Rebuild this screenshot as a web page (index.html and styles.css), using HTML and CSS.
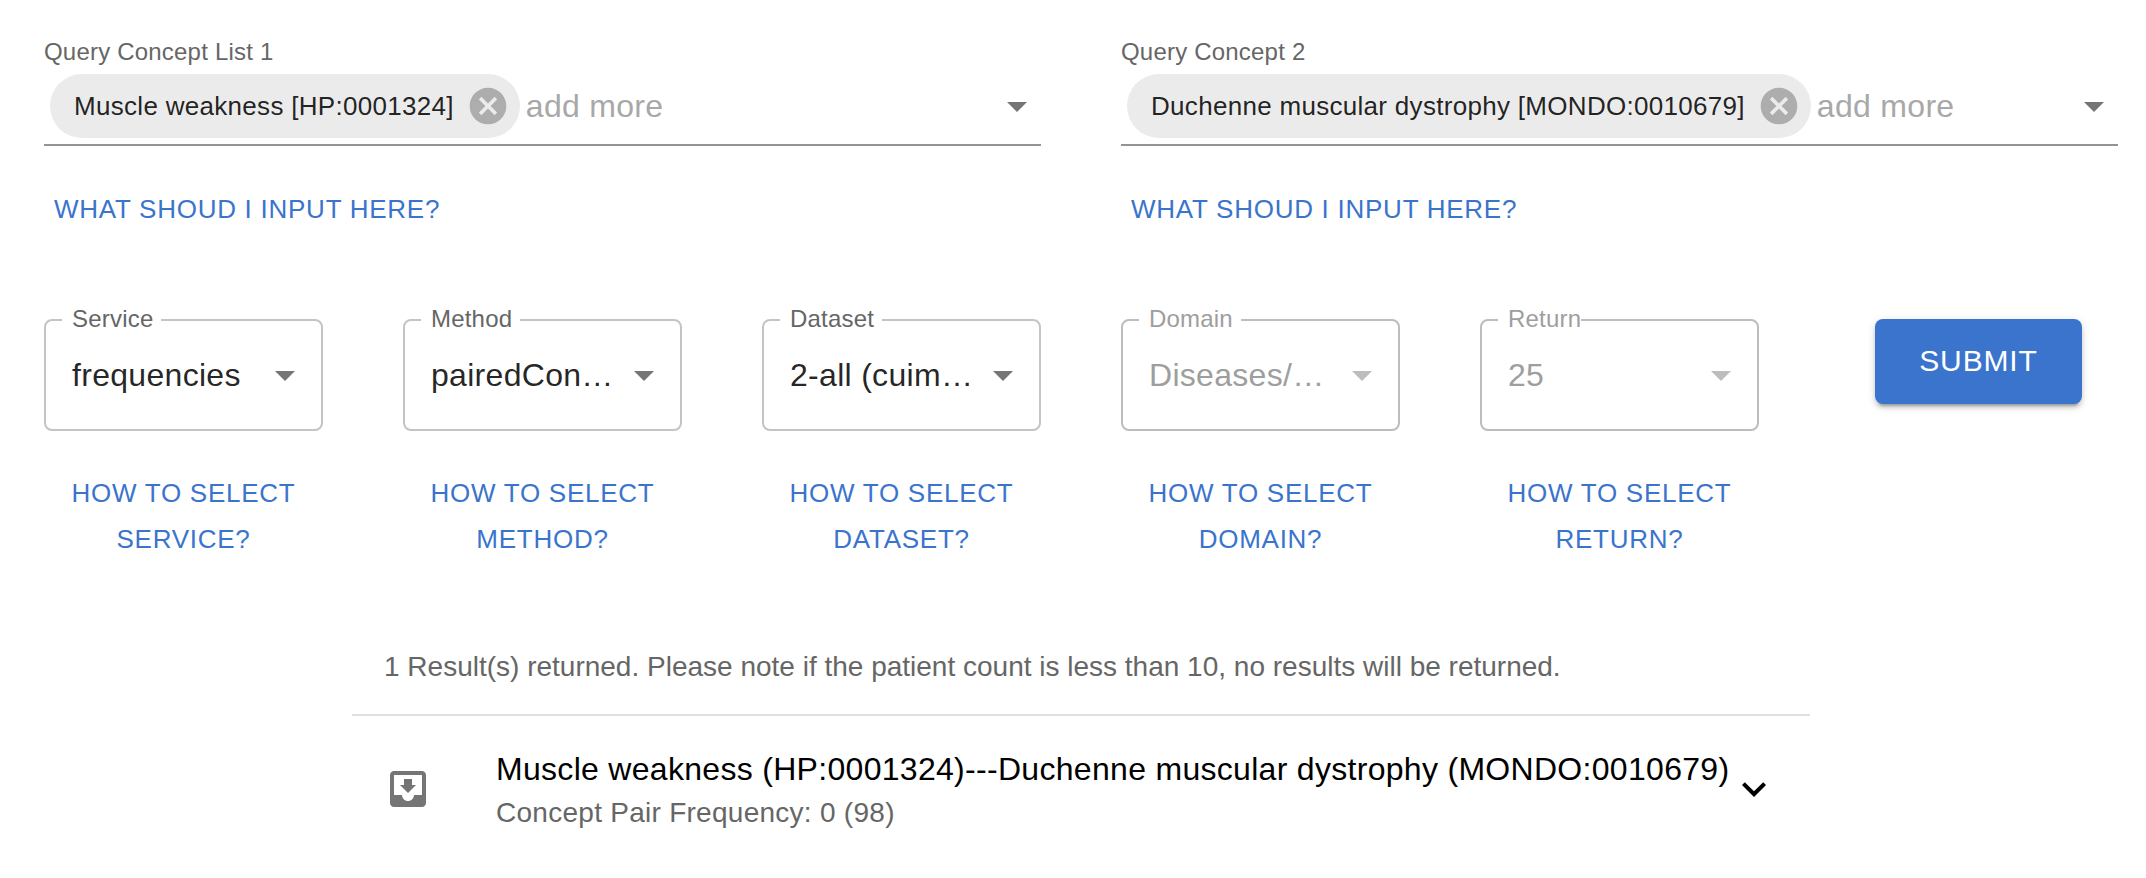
FILE: index.html
```html
<!DOCTYPE html>
<html lang="en">

<head>
    <meta charset="UTF-8">
    <meta name="viewport" content="width=device-width, initial-scale=1.0">
    <link rel="stylesheet" href="styles.css">
    <title>Concept Pair Query</title>
</head>

<body>
    <svg class="icon-defs" width="0" height="0">
        <symbol id="arrow" viewBox="0 0 24 24"><path d="M7 10l5 5 5-5z" /></symbol>
        <symbol id="cancel" viewBox="0 0 24 24"><path d="M12 2C6.47 2 2 6.47 2 12s4.47 10 10 10 10-4.47 10-10S17.53 2 12 2zm5 13.59L15.59 17 12 13.41 8.41 17 7 15.59 10.59 12 7 8.41 8.41 7 12 10.59 15.59 7 17 8.41 13.41 12 17 15.59z" /></symbol>
    </svg>

    <main class="page">
        <section class="concepts">
            <div class="concept">
                <div class="concept-label">Query Concept List 1</div>
                <div class="concept-field">
                    <span class="chip">
                        <span class="chip-text">Muscle weakness [HP:0001324]</span>
                        <svg class="chip-delete"><use href="#cancel" /></svg>
                    </span>
                    <span class="add-more">add more</span>
                    <svg class="arrow"><use href="#arrow" /></svg>
                </div>
                <a class="link-button" href="#">What shoud I input here?</a>
            </div>
            <div class="concept">
                <div class="concept-label">Query Concept 2</div>
                <div class="concept-field">
                    <span class="chip">
                        <span class="chip-text">Duchenne muscular dystrophy [MONDO:0010679]</span>
                        <svg class="chip-delete"><use href="#cancel" /></svg>
                    </span>
                    <span class="add-more">add more</span>
                    <svg class="arrow"><use href="#arrow" /></svg>
                </div>
                <a class="link-button" href="#">What shoud I input here?</a>
            </div>
        </section>

        <section class="options">
            <div class="option">
                <div class="select">
                    <span class="select-label">Service</span>
                    <span class="select-value">frequencies</span>
                    <svg class="arrow"><use href="#arrow" /></svg>
                </div>
                <a class="link-button link-centered" href="#">How to select Service?</a>
            </div>
            <div class="option">
                <div class="select">
                    <span class="select-label">Method</span>
                    <span class="select-value">pairedCon…</span>
                    <svg class="arrow"><use href="#arrow" /></svg>
                </div>
                <a class="link-button link-centered" href="#">How to select Method?</a>
            </div>
            <div class="option">
                <div class="select">
                    <span class="select-label">Dataset</span>
                    <span class="select-value">2-all (cuim…</span>
                    <svg class="arrow"><use href="#arrow" /></svg>
                </div>
                <a class="link-button link-centered" href="#">How to select Dataset?</a>
            </div>
            <div class="option">
                <div class="select disabled">
                    <span class="select-label">Domain</span>
                    <span class="select-value">Diseases/…</span>
                    <svg class="arrow"><use href="#arrow" /></svg>
                </div>
                <a class="link-button link-centered" href="#">How to select Domain?</a>
            </div>
            <div class="option">
                <div class="select disabled">
                    <span class="select-label label-tight">Return</span>
                    <span class="select-value">25</span>
                    <svg class="arrow"><use href="#arrow" /></svg>
                </div>
                <a class="link-button link-centered" href="#">How to select Return?</a>
            </div>
            <div class="option option-submit">
                <button class="submit" type="button">Submit</button>
            </div>
        </section>

        <section class="results">
            <p class="results-note">1 Result(s) returned. Please note if the patient count is less than 10, no results will be returned.</p>
            <div class="result-row">
                <svg class="result-icon" viewBox="0 0 24 24">
                    <path d="M19 3H4.99c-1.11 0-1.98.9-1.98 2L3 19c0 1.1.88 2 1.99 2H19c1.1 0 2-.9 2-2V5c0-1.1-.9-2-2-2zm0 12h-4c0 1.66-1.35 3-3 3s-3-1.34-3-3H4.99V5H19v10zm-3-5h-2V7h-4v3H8l4 4 4-4z" />
                </svg>
                <div class="result-text">
                    <div class="result-title">Muscle weakness (HP:0001324)---Duchenne muscular dystrophy (MONDO:0010679)</div>
                    <div class="result-sub">Concept Pair Frequency: 0 (98)</div>
                </div>
                <svg class="result-expand" viewBox="0 0 24 24">
                    <path d="M16.59 8.59 12 13.17 7.41 8.59 6 10l6 6 6-6z" />
                </svg>
            </div>
        </section>
    </main>
</body>

</html>
```

FILE: styles.css
```css
body {
    font-family: "Liberation Sans", Arial, sans-serif;
    margin: 0;
    padding: 0;
    color: rgba(0, 0, 0, 0.87);
    background-color: white;
}

.icon-defs {
    position: absolute;
}

.page {
    width: 2074px;
    margin-left: 44px;
    padding-top: 36px;
}

/* top row */
.concepts {
    display: grid;
    grid-template-columns: repeat(2, minmax(0, 1fr));
    column-gap: 80px;
}

.concept-label {
    font-size: 24px;
    line-height: 32px;
    color: #666;
    letter-spacing: 0.2px;
}

.concept-field {
    display: flex;
    align-items: center;
    height: 76px;
    border-bottom: 2px solid #949494;
}

.chip {
    display: flex;
    align-items: center;
    height: 64px;
    margin-left: 6px;
    margin-right: 6px;
    border-radius: 32px;
    background-color: #ebebeb;
    flex-shrink: 0;
}

.chip-text {
    font-size: 26px;
    letter-spacing: 0.3px;
    padding: 0 24px;
    white-space: nowrap;
}

.chip-delete {
    width: 44px;
    height: 44px;
    margin: 0 10px 0 -12px;
    fill: #adadad;
}

.add-more {
    flex: 1;
    font-size: 32px;
    letter-spacing: 0.3px;
    color: #a8a8a8;
}

.arrow {
    width: 48px;
    height: 48px;
    flex-shrink: 0;
    fill: #757575;
}

.link-button {
    display: block;
    width: max-content;
    margin-top: 32px;
    padding: 8px 10px;
    font-size: 26px;
    line-height: 46px;
    letter-spacing: 0.74px;
    text-transform: uppercase;
    text-decoration: none;
    color: #3a74cc;
}

.link-centered {
    width: auto;
    margin-top: 31px;
    text-align: center;
}

/* select row */
.options {
    display: grid;
    grid-template-columns: repeat(6, minmax(0, 1fr));
    column-gap: 80px;
    margin-top: 79px;
}

.select {
    position: relative;
    display: flex;
    align-items: center;
    height: 112px;
    box-sizing: border-box;
    padding: 0 12px 0 26px;
    border: 2px solid #c4c4c4;
    border-radius: 8px;
}

.select-label {
    position: absolute;
    top: -16px;
    left: 16px;
    padding: 0 8px 0 10px;
    font-size: 24px;
    line-height: 28px;
    letter-spacing: 0.2px;
    color: #666;
    background-color: white;
}

.label-tight {
    padding-right: 0;
}

.select-value {
    flex: 1;
    min-width: 0;
    font-size: 32px;
    letter-spacing: 0.3px;
    white-space: nowrap;
}

.disabled {
    border-color: #bdbdbd;
}

.disabled .select-label,
.disabled .select-value {
    color: #9e9e9e;
}

.disabled .arrow {
    fill: #bdbdbd;
}

.option-submit {
    display: flex;
    justify-content: center;
    align-items: flex-start;
}

.submit {
    padding: 16px 44px;
    font-family: inherit;
    font-size: 30px;
    line-height: 52.5px;
    letter-spacing: 0.86px;
    text-transform: uppercase;
    color: white;
    background-color: #3a74cc;
    border: none;
    border-radius: 8px;
    box-shadow: 0 6px 2px -4px rgba(0, 0, 0, 0.2), 0 4px 4px 0 rgba(0, 0, 0, 0.14), 0 2px 10px 0 rgba(0, 0, 0, 0.12);
}

/* results */
.results {
    width: 1458px;
    margin: 0 auto;
}

.results-note {
    margin: 75px 0 0;
    padding: 0 32px 25px;
    font-size: 28px;
    line-height: 44px;
    color: #666;
    border-bottom: 2px solid #e0e0e0;
}

.result-row {
    display: flex;
    align-items: center;
    padding: 29px 32px 16px;
}

.result-icon {
    width: 48px;
    height: 48px;
    margin-right: 64px;
    flex-shrink: 0;
    fill: #757575;
}

.result-text {
    flex: 1;
    min-width: 0;
}

.result-title {
    font-size: 32px;
    line-height: 48px;
    letter-spacing: 0.3px;
    color: black;
}

.result-sub {
    font-size: 28px;
    line-height: 40px;
    letter-spacing: 0.27px;
    color: #666;
}

.result-expand {
    width: 48px;
    height: 48px;
    flex-shrink: 0;
    fill: black;
}
```
